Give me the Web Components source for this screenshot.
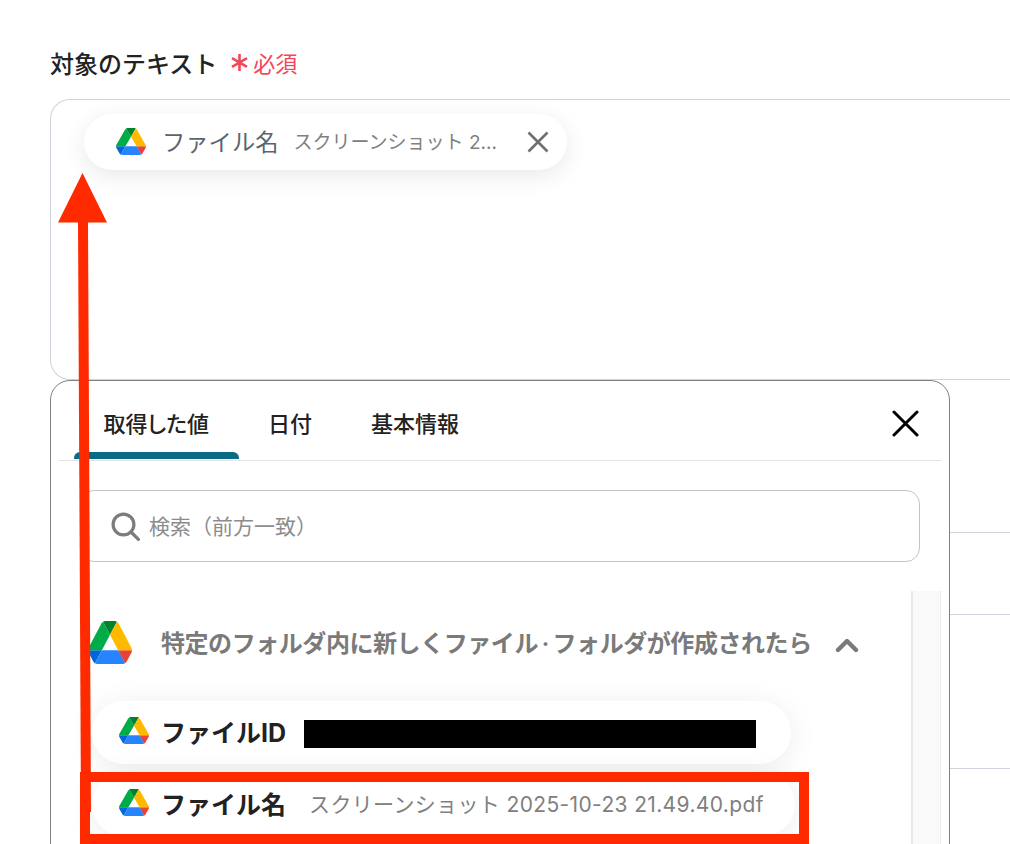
<!DOCTYPE html>
<html lang="ja">
<head>
<meta charset="utf-8">
<title>対象のテキスト</title>
<style>
  html, body {
    margin: 0;
    height: 844px;
    overflow: hidden;
    background: #fff;
    font-family: Inter, "Noto Sans CJK JP", sans-serif;
  }
</style>
</head>
<body>
<form-page></form-page>

<script>
const driveTemplate = document.createElement('template')

driveTemplate.innerHTML = `
  <style>
    :host {
      display: inline-block;
      flex: none;
      line-height: 0;
    }

    svg {
      width: 100%;
      height: 100%;
    }
  </style>

  <svg viewBox="0 0 87.3 78" preserveAspectRatio="none">
    <path d="m6.6 66.85 3.85 6.65c.8 1.4 1.95 2.5 3.3 3.3l13.75-23.8h-27.5c0 1.55.4 3.1 1.2 4.5z" fill="#0066da"/>
    <path d="m43.65 25-13.75-23.8c-1.35.8-2.5 1.9-3.3 3.3l-25.4 44a9.06 9.06 0 0 0 -1.2 4.5h27.5z" fill="#00ac47"/>
    <path d="m73.55 76.8c1.35-.8 2.5-1.9 3.3-3.3l1.6-2.75 7.65-13.25c.8-1.4 1.2-2.95 1.2-4.5h-27.502l5.852 11.5z" fill="#ea4335"/>
    <path d="m43.65 25 13.75-23.8c-1.35-.8-2.9-1.2-4.5-1.2h-18.5c-1.6 0-3.15.45-4.5 1.2z" fill="#00832d"/>
    <path d="m59.8 53h-32.3l-13.75 23.8c1.35.8 2.9 1.2 4.5 1.2h50.8c1.6 0 3.15-.45 4.5-1.2z" fill="#2684fc"/>
    <path d="m73.4 26.5-12.7-22c-.8-1.4-1.95-2.5-3.3-3.3l-13.75 23.8 16.15 28h27.45c0-1.55-.4-3.1-1.2-4.5z" fill="#ffba00"/>
  </svg>
`

class DriveIcon extends HTMLElement {
  constructor() {
    super()
    this.attachShadow({ mode: 'open' }).appendChild(driveTemplate.content.cloneNode(true))
  }
}

const pillTemplate = document.createElement('template')

pillTemplate.innerHTML = `
  <style>
    :host {
      display: flex;
      align-items: center;
      box-sizing: border-box;
      height: 63px;
      padding: 0 0 4px 27px;
      background: #fff;
      border-radius: 32px;
      box-shadow: 0 4px 30px rgba(0, 0, 0, .08);
      white-space: nowrap;
    }

    drive-icon {
      width: 30px;
      height: 27px;
      margin-right: 12px;
    }

    .name {
      font-size: 25px;
      font-weight: 700;
      color: #222;
      margin-right: var(--value-gap, 18px);
    }

    .value {
      font-size: 21px;
      letter-spacing: .36px;
      color: #808080;
    }

    :host([chosen]) {
      height: 56px;
      padding: 0 0 3px 32px;
      border-radius: 28px;
      box-shadow: 0 6px 24px rgba(0, 0, 0, .09);
    }

    :host([chosen]) drive-icon {
      margin: 2px 16px 0 0;
    }

    :host([chosen]) .name {
      font-size: 23.3px;
      font-weight: 400;
      color: #5b6570;
      margin-right: 15px;
    }

    :host([chosen]) .value {
      width: 208px;
      font-size: 19px;
      letter-spacing: 0;
      overflow: hidden;
      text-overflow: ellipsis;
    }
  </style>

  <drive-icon></drive-icon>
  <span class="name"></span>
  <span class="value"><slot></slot></span>
  <slot name="end"></slot>
`

class ValuePill extends HTMLElement {
  constructor() {
    super()
    this.attachShadow({ mode: 'open' }).appendChild(pillTemplate.content.cloneNode(true))
  }

  connectedCallback() {
    this.shadowRoot.querySelector('.name').textContent = this.getAttribute('name')
  }
}

const tabTemplate = document.createElement('template')

tabTemplate.innerHTML = `
  <style>
    :host {
      display: flex;
      align-items: center;
      position: relative;
      box-sizing: border-box;
      height: 79px;
      padding: 3px 29.5px 0;
      font-size: 22px;
      font-weight: 500;
      font-feature-settings: "palt";
      color: #222;
    }

    :host([active])::after {
      content: "";
      position: absolute;
      left: 0;
      right: 0;
      bottom: 1px;
      height: 7px;
      background: #0a6b85;
      border-radius: 6px 6px 0 0;
    }
  </style>

  <slot></slot>
`

class PickerTab extends HTMLElement {
  constructor() {
    super()
    this.attachShadow({ mode: 'open' }).appendChild(tabTemplate.content.cloneNode(true))
  }
}

const panelTemplate = document.createElement('template')

panelTemplate.innerHTML = `
  <style>
    :host {
      display: block;
      position: absolute;
      left: 50px;
      top: 380px;
      box-sizing: border-box;
      width: 900px;
      height: 520px;
      background: #fff;
      border: 1px solid #808080;
      border-radius: 20px;
      padding: 0 8px 0 7px;
    }

    .tabs {
      display: flex;
      align-items: center;
      padding-left: 16px;
      border-bottom: 1px solid #e2e4e6;
    }

    .close {
      margin-left: auto;
      margin-right: 22px;
      width: 27px;
      height: 27px;
      margin-top: 6px;
    }

    .search {
      display: flex;
      align-items: center;
      gap: 9px;
      box-sizing: border-box;
      height: 72px;
      margin: 29px 21px 29px 22px;
      padding: 0 0 0 30px;
      border: 1px solid #c4c4c4;
      border-radius: 14px;
      font-size: 21px;
      color: #8c8c8c;
    }

    .search span {
      margin-bottom: 2px;
    }

    .search svg {
      width: 29px;
      height: 29px;
      flex: none;
    }

    .body {
      display: flex;
      height: 300px;
    }

    .list {
      flex: 1;
      min-width: 0;
      padding-left: 30px;
    }

    .scroll {
      box-sizing: border-box;
      flex: none;
      width: 30px;
      background: #f9f9f9;
      border-left: 2px solid #e8e8e8;
      border-right: 1px solid #ececec;
    }

    .group {
      display: flex;
      align-items: center;
      height: 103px;
      font-size: 24px;
      font-weight: 700;
      letter-spacing: -.44px;
      color: #7a7a7a;
      white-space: nowrap;
    }

    .group .title {
      margin-bottom: 3px;
    }

    .group .dot {
      font-size: 15px;
      vertical-align: 2px;
    }

    .group drive-icon {
      width: 44px;
      height: 43px;
      margin-right: 29px;
    }

    .group svg {
      width: 24px;
      height: 16px;
      margin: 5px 0 0 23px;
      flex: none;
    }

    .items {
      display: flex;
      flex-direction: column;
      gap: 9px;
      padding: 7px 0 0 4px;
    }

    .redacted {
      display: block;
      width: 452px;
      height: 28px;
      margin-top: 7px;
      background: #000;
    }
  </style>

  <div class="tabs">
    <picker-tab active>取得した値</picker-tab>
    <picker-tab>日付</picker-tab>
    <picker-tab>基本情報</picker-tab>
    <svg class="close" viewBox="0 0 27 27" fill="none" stroke="#000" stroke-width="3" stroke-linecap="round">
      <path d="M2 2 25 25M25 2 2 25"/>
    </svg>
  </div>

  <div class="search">
    <svg viewBox="0 0 29 29" fill="none" stroke="#7c7c7c" stroke-width="3.2">
      <circle cx="12.5" cy="12.5" r="10.4"/>
      <path d="M20 20l7.4 7.4" stroke-linecap="round"/>
    </svg>
    <span>検索（前方一致）</span>
  </div>

  <div class="body">
    <div class="list">
      <div class="group">
        <drive-icon></drive-icon>
        <span class="title">特定のフォルダ内に新しくファイル<span class="dot">・</span>フォルダが作成されたら</span>
        <svg viewBox="0 0 24 16" fill="none" stroke="#7a7a7a" stroke-width="4.4" stroke-linecap="round" stroke-linejoin="round">
          <path d="M3 13 12 4l9 9"/>
        </svg>
      </div>
      <div class="items">
        <value-pill name="ファイルID" style="width:699px"><span class="redacted"></span></value-pill>
        <value-pill name="ファイル名" style="width:703px; --value-gap:23px">スクリーンショット 2025-10-23 21.49.40.pdf</value-pill>
      </div>
    </div>
    <div class="scroll"></div>
  </div>
`

class PickerPanel extends HTMLElement {
  constructor() {
    super()
    this.attachShadow({ mode: 'open' }).appendChild(panelTemplate.content.cloneNode(true))
  }
}

const markupTemplate = document.createElement('template')

markupTemplate.innerHTML = `
  <style>
    :host {
      display: block;
      position: absolute;
      left: 0;
      top: 0;
      pointer-events: none;
    }

    svg {
      display: block;
    }
  </style>

  <svg width="1010" height="844" viewBox="0 0 1010 844">
    <path d="M78 222h10l3 590H81z" fill="#ff2a00"/>
    <path d="M82.500 173 107 222.500H58z" fill="#ff2a00"/>
    <rect x="85" y="777" width="719" height="62" fill="none" stroke="#ff2a00" stroke-width="10"/>
  </svg>
`

class ScreenshotMarkup extends HTMLElement {
  constructor() {
    super()
    this.attachShadow({ mode: 'open' }).appendChild(markupTemplate.content.cloneNode(true))
  }
}

const pageTemplate = document.createElement('template')

pageTemplate.innerHTML = `
  <style>
    :host {
      display: block;
      position: relative;
      box-sizing: border-box;
      height: 844px;
      padding-left: 50px;
      overflow: hidden;
      color: #222;
    }

    .label {
      display: flex;
      align-items: center;
      height: 99px;
      padding-top: 25px;
      box-sizing: border-box;
      font-size: 24px;
      font-weight: 500;
    }

    .required {
      display: flex;
      align-items: center;
      margin-left: 14px;
      font-size: 22px;
      font-weight: 400;
      color: #f5455c;
    }

    .required svg {
      width: 17px;
      height: 17px;
      margin-right: 5px;
    }

    .box {
      box-sizing: border-box;
      width: 1100px;
      border: 1px solid #cfd4dc;
      border-right: 0;
    }

    .textbox {
      height: 281px;
      padding: 14px 0 0 33px;
      border-radius: 20px 0 0 20px;
    }

    .textbox value-pill {
      width: 483px;
    }

    .close-small {
      width: 22px;
      height: 22px;
      margin: 3px 0 0 26px;
      flex: none;
    }

    .second {
      height: 83px;
      margin-top: 152px;
    }

    .third {
      height: 60px;
      margin-top: 153px;
      border-bottom: 0;
    }
  </style>

  <div class="label">
    対象のテキスト
    <span class="required">
      <svg viewBox="0 0 17 17" fill="none" stroke="#f5455c" stroke-width="2.600">
        <path d="M8.500 0v17M1 4.200l15 8.600M16 4.200 1 12.800"/>
      </svg>
      必須
    </span>
  </div>

  <div class="box textbox">
    <value-pill chosen name="ファイル名">
      スクリーンショット 2025-10-23 21.49.40.pdf
      <svg slot="end" class="close-small" viewBox="0 0 22 22" fill="none" stroke="#6f6f6f" stroke-width="2.600">
        <path d="M1.500 1.500l19 19M20.500 1.500l-19 19"/>
      </svg>
    </value-pill>
  </div>
  <div class="box second"></div>
  <div class="box third"></div>

  <picker-panel></picker-panel>
  <screenshot-markup></screenshot-markup>
`

class FormPage extends HTMLElement {
  constructor() {
    super()
    this.attachShadow({ mode: 'open' }).appendChild(pageTemplate.content.cloneNode(true))
  }
}

window.customElements.define('drive-icon', DriveIcon)
window.customElements.define('value-pill', ValuePill)
window.customElements.define('picker-tab', PickerTab)
window.customElements.define('picker-panel', PickerPanel)
window.customElements.define('screenshot-markup', ScreenshotMarkup)
window.customElements.define('form-page', FormPage)
</script>
</body>
</html>
